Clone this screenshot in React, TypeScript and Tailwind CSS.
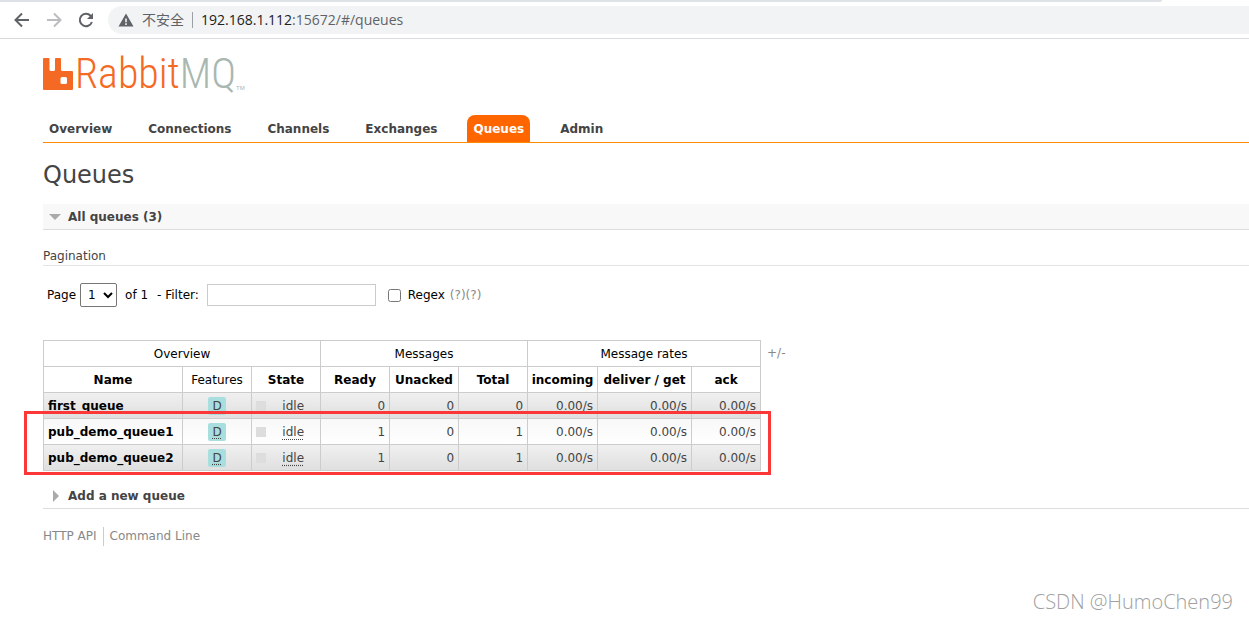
import React, { useState } from 'react';
import clsx from 'clsx';

interface Queue {
  name: string;
  durable: boolean;
  state: string;
  ready: number;
  unacked: number;
  total: number;
  incoming: string;
  deliver: string;
  ack: string;
}

const tabs = ['Overview', 'Connections', 'Channels', 'Exchanges', 'Queues', 'Admin'];

const queues: Queue[] = [
  { name: 'first_queue', durable: true, state: 'idle', ready: 0, unacked: 0, total: 0, incoming: '0.00/s', deliver: '0.00/s', ack: '0.00/s' },
  { name: 'pub_demo_queue1', durable: true, state: 'idle', ready: 1, unacked: 0, total: 1, incoming: '0.00/s', deliver: '0.00/s', ack: '0.00/s' },
  { name: 'pub_demo_queue2', durable: true, state: 'idle', ready: 1, unacked: 0, total: 1, incoming: '0.00/s', deliver: '0.00/s', ack: '0.00/s' },
];

const BrowserBar: React.FC = () => (
  <div className="h-[39px] border-b border-[#d8dadc] font-['Open_Sans','Noto_Sans_CJK_SC',sans-serif] text-sm">
    <div className="mr-[87px] h-[2px] rounded-br-sm bg-[#dee1e6]"></div>
    <div className="flex h-9 items-center pl-3">
      <button aria-label="Back" className="w-5 text-[#5f6368]">
        <svg viewBox="0 0 20 20" className="h-5 w-5" fill="none" stroke="currentColor" strokeWidth="2">
          <path d="M17 10H4M10 3.5L3.5 10L10 16.5" />
        </svg>
      </button>
      <button aria-label="Forward" className="ml-3 w-5 text-[#babcbe]">
        <svg viewBox="0 0 20 20" className="h-5 w-5" fill="none" stroke="currentColor" strokeWidth="2">
          <path d="M3 10H16M10 3.5L16.5 10L10 16.5" />
        </svg>
      </button>
      <button aria-label="Reload" className="ml-3 w-5 text-[#5f6368]">
        <svg viewBox="0 0 20 20" className="h-5 w-5" fill="none" stroke="currentColor" strokeWidth="2">
          <path d="M15.9 12A6.2 6.2 0 1 1 14.6 5.8L16 7.4" />
          <path d="M17 3V9H11L17 3Z" fill="currentColor" stroke="none" />
        </svg>
      </button>
      <div className="ml-3 flex h-7 flex-1 items-center rounded-l-full bg-[#f1f3f4] pl-[10px] text-[#5f6368]">
        <svg viewBox="0 0 16 14" className="h-[14px] w-4" fill="currentColor">
          <path fillRule="evenodd" d="M8 0.5L15.5 13.5H0.5ZM7.2 5.5V9.2H8.8V5.5ZM7.2 10.3V11.9H8.8V10.3Z" />
        </svg>
        <span className="ml-2">不安全</span>
        <span className="mx-2 h-4 w-px bg-[#9aa0a6]"></span>
        <span>
          <span className="text-[#202124]">192.168.1.112</span>:15672/#/queues
        </span>
      </div>
    </div>
  </div>
);

const Logo: React.FC = () => (
  <a href="#/" aria-label="RabbitMQ" className="flex h-9 items-center">
    <svg viewBox="0 0 30 32" className="h-8 w-[30px]">
      <path
        fill="#f46a25"
        fillRule="evenodd"
        d="M1 0H5.5Q6.5 0 6.5 1V11.5Q6.5 13 8 13H10.5Q12 13 12 11.5V1Q12 0 13 0H17Q18 0 18 1V11.5Q18 13 19.5 13H29Q30 13 30 14V31Q30 32 29 32H1Q0 32 0 31V1Q0 0 1 0ZM19 19Q17.5 19 17.5 20.5V24.5Q17.5 26 19 26H22.5Q24 26 24 24.5V20.5Q24 19 22.5 19Z"
      />
    </svg>
    <span className="ml-[2px] font-['Roboto_Condensed','Liberation_Sans_Narrow',Roboto,sans-serif] text-[42px] leading-9 font-light text-[#f46a25]">
      Rabbit<span className="text-[#a9b7b1]">MQ</span>
    </span>
    <span className="self-end font-['Liberation_Sans',sans-serif] text-[6px] text-[#a9b7b1]">TM</span>
  </a>
);

const App: React.FC = () => {
  const [filter, setFilter] = useState('');
  const [regex, setRegex] = useState(false);

  return (
    <div className="relative min-h-screen overflow-hidden bg-white font-['DejaVu_Sans',Verdana,sans-serif] text-xs text-[#444]">
      <BrowserBar />

      <div className="pl-[43px]">
        <div className="pt-[17px]">
          <Logo />
        </div>

        {/* Tabs */}
        <nav className="mt-[23px] flex gap-6 border-b border-[#ff8c00] font-bold">
          {tabs.map(tab => (
            <a
              key={tab}
              href={`#/${tab.toLowerCase()}`}
              className={clsx('flex h-[27px] items-center rounded-t-lg px-[6px]', tab === 'Queues' && 'bg-[#f60] text-white')}
            >
              {tab}
            </a>
          ))}
        </nav>

        <h1 className="mt-4 text-2xl leading-8">Queues</h1>

        <h2 className="mt-[13px] flex h-[26px] items-center border-b border-[#ddd] bg-[#f8f8f8] pl-[6px] font-bold">
          <svg viewBox="0 0 12 6" className="mr-[7px] h-[6px] w-3" fill="#aaa">
            <path d="M0 0H12L6 6Z" />
          </svg>
          All queues (3)
        </h2>

        <h3 className="mt-[17px] border-b border-[#e4e4e4] leading-[18px]">Pagination</h3>

        {/* Paging and filter */}
        <div className="mt-4 flex h-[26px] items-center pl-1 text-black">
          <label htmlFor="page">Page</label>
          <select id="page" className="ml-1 h-6 w-[37px] rounded-xs border border-[#767676] bg-white pl-[3px]">
            <option>1</option>
          </select>
          <span className="ml-2">of 1</span>
          <label htmlFor="filter" className="ml-[9px]">- Filter:</label>
          <input
            id="filter"
            type="text"
            value={filter}
            onChange={e => setFilter(e.target.value)}
            className="ml-2 h-[22px] w-[169px] border border-[#ccc] px-1"
          />
          <input id="regex" type="checkbox" checked={regex} onChange={e => setRegex(e.target.checked)} className="ml-3 h-[13px] w-[13px]" />
          <label htmlFor="regex" className="ml-[7px]">Regex</label>
          <a href="#/regex" className="ml-[5px] text-[#888]">(?)</a>
          <a href="#/regex-help" className="text-[#888]">(?)</a>
        </div>

        <div className="mt-8 flex items-start">
          <div className="relative">
            <table className="w-[718px] table-fixed border-collapse whitespace-nowrap [&_td]:border [&_td]:border-[#ccc] [&_td]:px-1 [&_th]:border [&_th]:border-[#ccc]">
              <colgroup>
                <col className="w-[139px]" />
                <col className="w-[69px]" />
                <col className="w-[69px]" />
                <col className="w-[69px]" />
                <col className="w-[69px]" />
                <col className="w-[69px]" />
                <col className="w-[70px]" />
                <col className="w-[94px]" />
                <col className="w-[69px]" />
              </colgroup>
              <thead className="text-black">
                <tr className="h-[26px]">
                  <th colSpan={3} className="font-normal">Overview</th>
                  <th colSpan={3} className="font-normal">Messages</th>
                  <th colSpan={3} className="font-normal">Message rates</th>
                </tr>
                <tr className="h-[26px]">
                  <th>Name</th>
                  <th className="font-normal">Features</th>
                  <th>State</th>
                  <th>Ready</th>
                  <th>Unacked</th>
                  <th>Total</th>
                  <th>incoming</th>
                  <th>deliver / get</th>
                  <th>ack</th>
                </tr>
              </thead>
              <tbody>
                {queues.map((queue, index) => (
                  <tr
                    key={queue.name}
                    className={clsx(
                      'h-[26px] bg-linear-to-b text-right',
                      index % 2 === 0 ? 'from-[#f0f0f0] to-[#dfdfdf]' : 'from-[#f8f8f8] to-white'
                    )}
                  >
                    <td className="text-left font-bold text-black">
                      <a href={`#/queues/${queue.name}`}>{queue.name}</a>
                    </td>
                    <td className="text-center">
                      {queue.durable && (
                        <span className="inline-block rounded-xs bg-[#a9dede] px-1 leading-[18px]">
                          <abbr title="durable: true" className="underline decoration-dotted underline-offset-2">D</abbr>
                        </span>
                      )}
                    </td>
                    <td>
                      <div className="flex items-center justify-between pr-3">
                        <span className="h-[10px] w-[10px] bg-[#ddd]"></span>
                        <abbr title={queue.state} className="underline decoration-dotted underline-offset-3">{queue.state}</abbr>
                      </div>
                    </td>
                    <td>{queue.ready}</td>
                    <td>{queue.unacked}</td>
                    <td>{queue.total}</td>
                    <td>{queue.incoming}</td>
                    <td>{queue.deliver}</td>
                    <td>{queue.ack}</td>
                  </tr>
                ))}
              </tbody>
            </table>
            {/* Highlight round the demo queues */}
            <div className="pointer-events-none absolute top-[71px] -right-[10px] -left-[19px] h-16 border-3 border-[#fb3737]"></div>
          </div>
          <button className="ml-[6px] h-[26px] text-[#888]">+/-</button>
        </div>

        <h2 className="mt-3 flex h-[26px] items-center border-b border-[#ddd] pl-[10px] font-bold">
          <svg viewBox="0 0 6 12" className="mr-[9px] h-3 w-[6px]" fill="#aaa">
            <path d="M0 0L6 6L0 12Z" />
          </svg>
          Add a new queue
        </h2>

        <footer className="mt-[18px] flex leading-[19px] text-[#888]">
          <a href="#/api" className="border-r border-[#ccc] pr-[6px]">HTTP API</a>
          <a href="#/cli" className="pl-[6px]">Command Line</a>
        </footer>
      </div>

      <div className="absolute right-4 bottom-1 font-['Open_Sans',sans-serif] text-xl font-light text-[#a0a0a0]">CSDN @HumoChen99</div>
    </div>
  );
};

export default App;
